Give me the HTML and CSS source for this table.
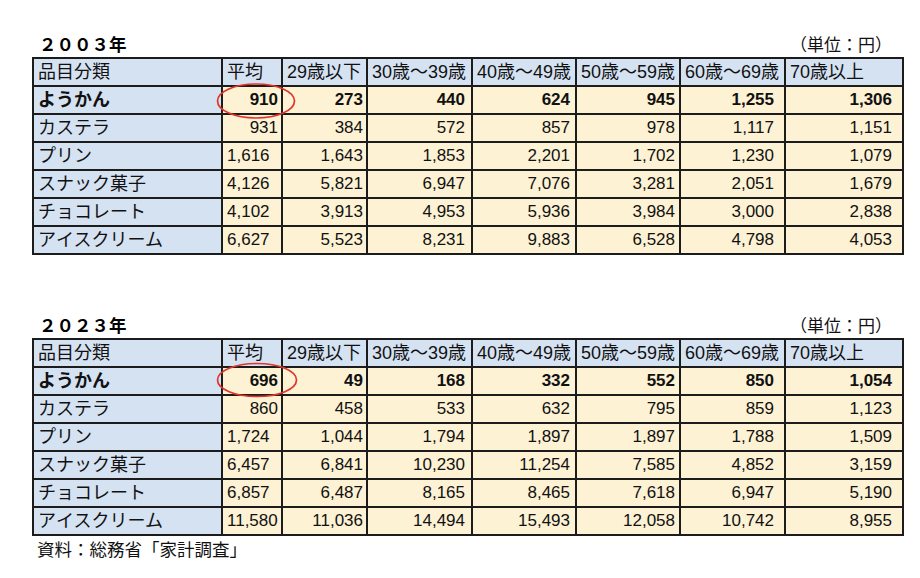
FILE: index.html
```html
<!DOCTYPE html>
<html lang="ja">
<head>
<meta charset="utf-8">
<title>ようかん 支出額</title>
<link rel="stylesheet" href="styles.css">
</head>
<body>
<div class="page">
  <section class="block first">
    <div class="titlebar">
      <h2 class="title">２００３年</h2>
      <span class="unit">（単位：円）</span>
    </div>
    <div class="sheet">
      <div class="grid">
        <div class="h">品目分類</div><div class="h">平均</div><div class="h">29歳以下</div><div class="h">30歳〜39歳</div><div class="h">40歳〜49歳</div><div class="h">50歳〜59歳</div><div class="h">60歳〜69歳</div><div class="h">70歳以上</div>
        <div class="k b">ようかん</div><div class="v b">910</div><div class="v b">273</div><div class="v b">440</div><div class="v b">624</div><div class="v b">945</div><div class="v b">1,255</div><div class="v b">1,306</div>
        <div class="k">カステラ</div><div class="v">931</div><div class="v">384</div><div class="v">572</div><div class="v">857</div><div class="v">978</div><div class="v">1,117</div><div class="v">1,151</div>
        <div class="k">プリン</div><div class="v l">1,616</div><div class="v">1,643</div><div class="v">1,853</div><div class="v">2,201</div><div class="v">1,702</div><div class="v">1,230</div><div class="v">1,079</div>
        <div class="k">スナック菓子</div><div class="v l">4,126</div><div class="v">5,821</div><div class="v">6,947</div><div class="v">7,076</div><div class="v">3,281</div><div class="v">2,051</div><div class="v">1,679</div>
        <div class="k">チョコレート</div><div class="v l">4,102</div><div class="v">3,913</div><div class="v">4,953</div><div class="v">5,936</div><div class="v">3,984</div><div class="v">3,000</div><div class="v">2,838</div>
        <div class="k">アイスクリーム</div><div class="v l">6,627</div><div class="v">5,523</div><div class="v">8,231</div><div class="v">9,883</div><div class="v">6,528</div><div class="v">4,798</div><div class="v">4,053</div>
      </div>
      <svg class="mark mark-a" width="82" height="38" viewBox="0 0 82 38"><ellipse cx="41" cy="19" rx="38.5" ry="17" fill="none" stroke="#e0352b" stroke-width="1.7"/></svg>
    </div>
  </section>

  <section class="block second">
    <div class="titlebar">
      <h2 class="title">２０２３年</h2>
      <span class="unit">（単位：円）</span>
    </div>
    <div class="sheet">
      <div class="grid">
        <div class="h">品目分類</div><div class="h">平均</div><div class="h">29歳以下</div><div class="h">30歳〜39歳</div><div class="h">40歳〜49歳</div><div class="h">50歳〜59歳</div><div class="h">60歳〜69歳</div><div class="h">70歳以上</div>
        <div class="k b">ようかん</div><div class="v b">696</div><div class="v b">49</div><div class="v b">168</div><div class="v b">332</div><div class="v b">552</div><div class="v b">850</div><div class="v b">1,054</div>
        <div class="k">カステラ</div><div class="v">860</div><div class="v">458</div><div class="v">533</div><div class="v">632</div><div class="v">795</div><div class="v">859</div><div class="v">1,123</div>
        <div class="k">プリン</div><div class="v l">1,724</div><div class="v">1,044</div><div class="v">1,794</div><div class="v">1,897</div><div class="v">1,897</div><div class="v">1,788</div><div class="v">1,509</div>
        <div class="k">スナック菓子</div><div class="v l">6,457</div><div class="v">6,841</div><div class="v">10,230</div><div class="v">11,254</div><div class="v">7,585</div><div class="v">4,852</div><div class="v">3,159</div>
        <div class="k">チョコレート</div><div class="v l">6,857</div><div class="v">6,487</div><div class="v">8,165</div><div class="v">8,465</div><div class="v">7,618</div><div class="v">6,947</div><div class="v">5,190</div>
        <div class="k">アイスクリーム</div><div class="v l">11,580</div><div class="v">11,036</div><div class="v">14,494</div><div class="v">15,493</div><div class="v">12,058</div><div class="v">10,742</div><div class="v">8,955</div>
      </div>
      <svg class="mark mark-b" width="84" height="38" viewBox="0 0 84 38"><ellipse cx="42" cy="19" rx="39.5" ry="16.5" fill="none" stroke="#e0352b" stroke-width="1.7"/></svg>
    </div>
  </section>

  <p class="source">資料：総務省「家計調査」</p>
</div>
</body>
</html>
```

FILE: styles.css
```css
* { box-sizing: border-box; }

html, body {
  margin: 0;
  padding: 0;
  background: #ffffff;
}

body {
  font-family: "Liberation Sans", "Noto Sans CJK JP", sans-serif;
  color: #111;
  width: 920px;
  height: 578px;
  overflow: hidden;
  text-spacing-trim: space-all;
}

.page {
  padding-left: 32px;
  width: 920px;
}

.block.first { margin-top: 30px; }
.block.second { margin-top: 56px; }

.titlebar {
  width: 872px;
  height: 27px;
  display: flex;
  align-items: center;
  justify-content: space-between;
}

.title {
  margin: 0;
  padding-left: 7px;
  font-family: "Noto Sans CJK JP", sans-serif;
  font-weight: 700;
  font-size: 17.5px;
  line-height: 20px;
  color: #000;
}

.unit {
  padding-right: 12px;
  font-family: "Noto Sans CJK JP", sans-serif;
  font-size: 17px;
  line-height: 20px;
  color: #111;
}

.sheet {
  position: relative;
  width: 872px;
}

.grid {
  display: grid;
  grid-template-columns: 189px 60px 85px 105px 104px 104px 105px 118px;
  grid-auto-rows: 28px;
  border-left: 2px solid #1c1c1c;
  border-top: 2px solid #1c1c1c;
  width: 872px;
}

.grid > div {
  border-right: 2px solid #1c1c1c;
  border-bottom: 2px solid #1c1c1c;
  display: flex;
  align-items: center;
  font-size: 17px;
  line-height: 20px;
  white-space: nowrap;
  overflow: hidden;
  color: #111;
}

.h, .k {
  background: #d5e2f2;
  padding-left: 4px;
  font-size: 18px;
}

.grid > .h, .grid > .k { font-size: 18px; }

.v {
  background: #fdf2d4;
  justify-content: flex-end;
  padding-right: 3px;
}

.v.l {
  justify-content: flex-start;
  padding-left: 4px;
  padding-right: 0;
}

.b { font-weight: 700; }

.grid > .v:nth-child(8n+4) { padding-right: 6px; }
.grid > .v:nth-child(8n+5) { padding-right: 5px; }
.grid > .v:nth-child(8n+6) { padding-right: 4px; }
.grid > .v:nth-child(8n+7) { padding-right: 10px; }
.grid > .v:nth-child(8n) { padding-right: 10px; }

.mark {
  position: absolute;
  pointer-events: none;
}

.mark-a { left: 183px; top: 25px; }
.mark-b { left: 183px; top: 23px; }

.source {
  margin: 1px 0 0 0;
  padding-left: 5px;
  font-family: "Noto Sans CJK JP", sans-serif;
  font-size: 17.5px;
  line-height: 24px;
  color: #111;
}
```
